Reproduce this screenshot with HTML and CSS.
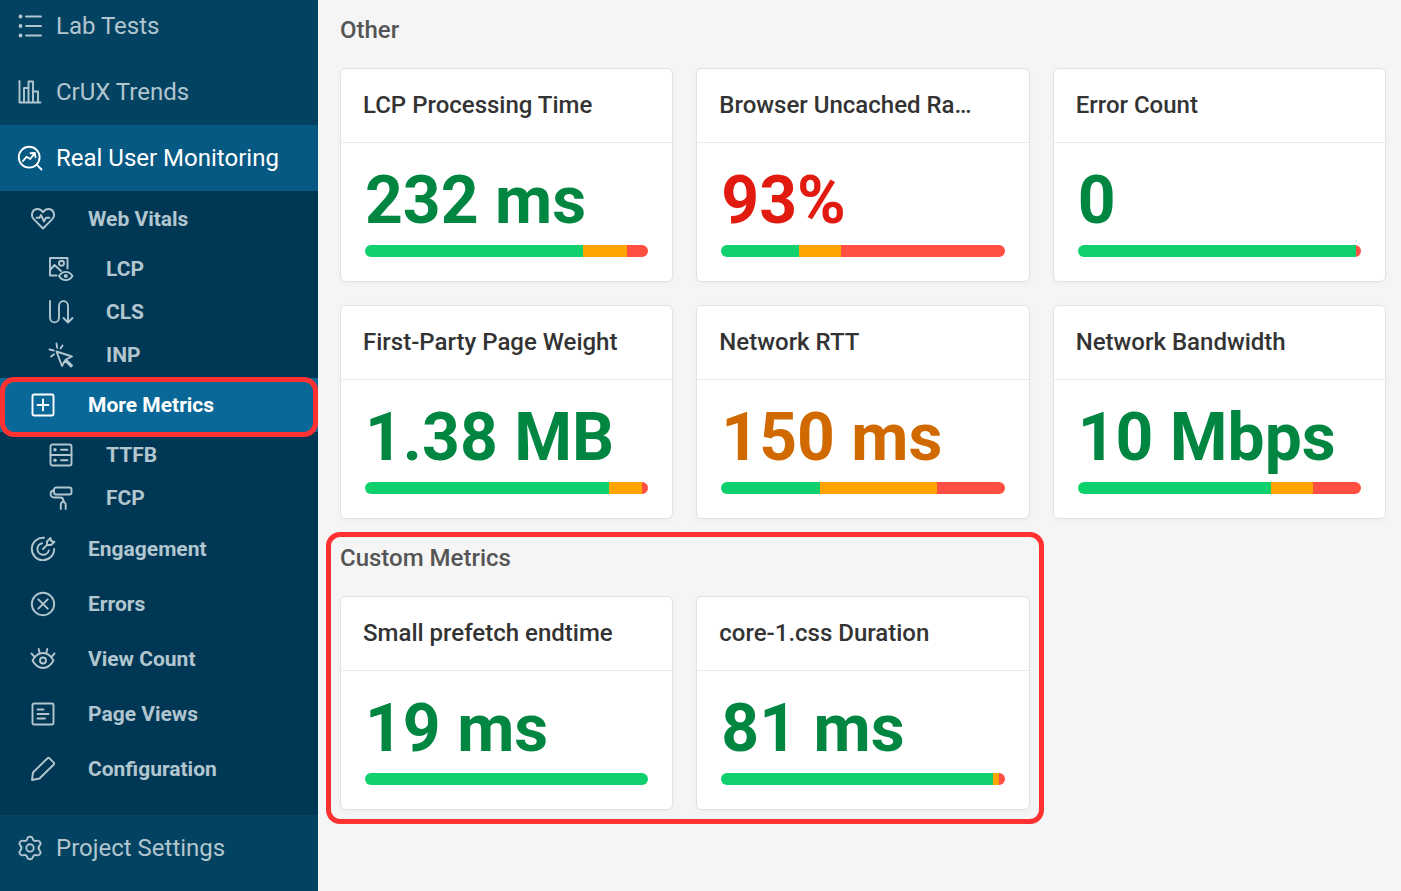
FILE: index.html
```html
<!DOCTYPE html>
<html lang="en">
<head>
<meta charset="utf-8">
<title>Real User Monitoring - More Metrics</title>
<link rel="stylesheet" href="styles.css">
</head>
<body>
<div class="app">
  <nav class="sidebar" aria-label="Project">
    <div class="nav-scroll">
      <a class="nav-item" href="#lab">
        <svg class="icon" viewBox="0 0 24 24"><path d="M8 2.500h15M8 12h15M8 21.500h15"/><g class="dot"><circle cx="2.500" cy="2.500" r="1.900"/><circle cx="2.500" cy="12" r="1.900"/><circle cx="2.500" cy="21.500" r="1.900"/></g></svg>
        Lab Tests</a>
      <a class="nav-item" href="#crux">
        <svg class="icon" viewBox="0 0 24 24"><path d="M1.500 1v21.500H22.500M6 22V8h4.500v14M10.500 22V1.500h4.500V22M15 11.500h5V22"/></svg>
        CrUX Trends</a>
      <a class="nav-item nav-item-open" href="#rum">
        <svg class="icon" viewBox="0 0 24 24"><circle cx="11.200" cy="11.200" r="10.400"/><path d="M18.700 18.700L23.500 23.500M5 15L8.500 10.800l3.700 2.200 4.300-5.500M12.500 7.300l4.300-.3.700 4.200"/></svg>
        Real User Monitoring</a>
      <div class="submenu">
        <a class="sub-item" href="#vitals">
          <svg class="icon" viewBox="0 0 24 24"><path d="M12 21.500L2.500 11.800C-.5 8.500 1 2.500 6 2c2.700-.2 4.800 1.300 6 3.300C13.200 3.300 15.300 1.800 18 2c5 .5 6.500 6.500 3.500 9.800z"/><path d="M5.500 10.800h3l1.500-2.800 3 6.500 2-3.700h3.500"/></svg>
          Web Vitals</a>
        <div class="leaves">
          <a class="leaf" href="#lcp">
            <svg class="icon" viewBox="0 0 24 24"><path d="M7.500 18.500H1V1h17.500v10.500M1 13l4.500-5 6.500 6"/><circle cx="12.500" cy="6.300" r="2.500"/><path d="M10 19c3.500-5.500 10-5.500 13.500 0-3.500 5.500-10 5.500-13.500 0z"/><circle cx="16.800" cy="19" r="1.100"/></svg>
            LCP</a>
          <a class="leaf" href="#cls">
            <svg class="icon" viewBox="0 0 24 24"><path d="M1 1v16.500c0 6.500 9 6.500 9 0V6c0-6.500 9-6.500 9 0v16.500M14.500 18l4.500 4.500 4.500-4.500"/></svg>
            CLS</a>
          <a class="leaf" href="#inp">
            <svg class="icon" viewBox="0 0 24 24"><path d="M7.500 8.500l15.500 5-6.200 3 6.200 6-1 1-6-6-3 5.500zM7.500.500l.7 4.300M.500 6.500l4.300 1M13.500 2.500l-2 3M2 13.500l3-2.200"/></svg>
            INP</a>
        </div>
        <a class="sub-item sub-item-current" href="#more" aria-current="page">
          <svg class="icon" viewBox="0 0 24 24"><rect x="1.500" y="1.500" width="21" height="21" rx="1.500"/><path d="M12 6.500v11M6.500 12h11"/></svg>
          More Metrics</a>
        <div class="leaves">
          <a class="leaf" href="#ttfb">
            <svg class="icon" viewBox="0 0 24 24"><rect x="1.500" y="1.500" width="21" height="21" rx="2"/><path d="M1.500 12h21M12 6.800h6.500M12 17.200h6.500"/><g class="dot"><circle cx="6" cy="6.800" r="1.700"/><circle cx="6" cy="17.200" r="1.700"/></g></svg>
            TTFB</a>
          <a class="leaf" href="#fcp">
            <svg class="icon" viewBox="0 0 24 24"><rect x="5" y="1.500" width="17.500" height="7" rx="2"/><path d="M5 4.500C.500 4.500 .500 11.500 5 11.500h6c3 0 3.500 1.500 3.500 4M11.800 23V18l1.500-2.200h1.900l1.500 2.200v5"/></svg>
            FCP</a>
        </div>
        <a class="sub-item" href="#engagement">
          <svg class="icon" viewBox="0 0 24 24"><path d="M13 .8A11.200 11.200 0 1 0 23.200 12M11 6.300a5.800 5.800 0 1 0 6.800 7.200M12 12l4.300-4.300M16 8V4.500L19.500 1l.7 3 3.300.8L20 8z"/></svg>
          Engagement</a>
        <a class="sub-item" href="#errors">
          <svg class="icon" viewBox="0 0 24 24"><circle cx="12" cy="12" r="11.200"/><path d="M7.300 7.300l9.400 9.400M16.700 7.300l-9.400 9.400"/></svg>
          Errors</a>
        <a class="sub-item" href="#views">
          <svg class="icon" viewBox="0 0 24 24"><path d="M1.500 13.500C7 3.500 17 3.500 22.500 13.500 17 23.500 7 23.500 1.500 13.500z"/><circle cx="12" cy="13.500" r="3"/><path d="M8.700 6L7.700 2M15.300 6l1-4M3.500 9.800L.500 6.500M20.500 9.800l3-3.300"/></svg>
          View Count</a>
        <a class="sub-item" href="#pages">
          <svg class="icon" viewBox="0 0 24 24"><rect x="1.500" y="1.500" width="21" height="21" rx="1.500"/><path d="M6.500 7.500h6M6.500 12h11M6.500 16.500h7.500"/></svg>
          Page Views</a>
        <a class="sub-item" href="#config">
          <svg class="icon" viewBox="0 0 24 24"><path d="M1 23l1-7.500L16.500 1.200q1-.7 1.800 0l4.500 4.500q.7.900 0 1.800L8.500 21.500z"/></svg>
          Configuration</a>
      </div>
      <a class="nav-item" href="#settings">
        <svg class="icon" viewBox="0 0 24 24"><path d="M9.200 2.900C9.700 0 14.300 0 14.800 2.900c.4 1.600 1.900 2.400 3.500 1.900 3.200-1 5.500 2.500 3.400 4.600-1.500 1.600-1.500 3.600 0 5.200 2.100 2.100-.2 5.600-3.400 4.600-1.600-.5-3.100.3-3.500 1.900-.5 2.900-5.100 2.900-5.600 0-.4-1.600-1.900-2.400-3.500-1.900-3.200 1-5.500-2.500-3.400-4.600 1.500-1.600 1.500-3.600 0-5.200C.2 7.300 2.500 3.800 5.700 4.800c1.600.5 3.100-.3 3.500-1.900z"/><circle cx="12" cy="12" r="3.700"/></svg>
        Project Settings</a>
    </div>
  </nav>

  <main class="content">
    <section class="group">
      <h2 class="group-title">Other</h2>
      <div class="cards">
        <article class="card">
          <h3 class="card-title">LCP Processing Time</h3>
          <div class="card-body"><p class="value good">232 ms</p>
            <div class="bar"><span class="bar-good" style="width:76.8%"></span><span class="bar-fair" style="width:15.8%"></span><span class="bar-poor" style="width:7.4%"></span></div></div>
        </article>
        <article class="card">
          <h3 class="card-title">Browser Uncached Ra…</h3>
          <div class="card-body"><p class="value poor">93%</p>
            <div class="bar"><span class="bar-good" style="width:27.5%"></span><span class="bar-fair" style="width:14.8%"></span><span class="bar-poor" style="width:57.7%"></span></div></div>
        </article>
        <article class="card">
          <h3 class="card-title">Error Count</h3>
          <div class="card-body"><p class="value good">0</p>
            <div class="bar"><span class="bar-good" style="width:98.2%"></span><span class="bar-poor" style="width:1.8%"></span></div></div>
        </article>
        <article class="card">
          <h3 class="card-title">First-Party Page Weight</h3>
          <div class="card-body"><p class="value good">1.38 MB</p>
            <div class="bar"><span class="bar-good" style="width:86%"></span><span class="bar-fair" style="width:11.6%"></span><span class="bar-poor" style="width:2.4%"></span></div></div>
        </article>
        <article class="card">
          <h3 class="card-title">Network RTT</h3>
          <div class="card-body"><p class="value fair">150 ms</p>
            <div class="bar"><span class="bar-good" style="width:34.9%"></span><span class="bar-fair" style="width:41.2%"></span><span class="bar-poor" style="width:23.9%"></span></div></div>
        </article>
        <article class="card">
          <h3 class="card-title">Network Bandwidth</h3>
          <div class="card-body"><p class="value good">10 Mbps</p>
            <div class="bar"><span class="bar-good" style="width:68.2%"></span><span class="bar-fair" style="width:14.8%"></span><span class="bar-poor" style="width:17%"></span></div></div>
        </article>
      </div>
    </section>

    <section class="group">
      <h2 class="group-title">Custom Metrics</h2>
      <div class="cards">
        <article class="card">
          <h3 class="card-title">Small prefetch endtime</h3>
          <div class="card-body"><p class="value good">19 ms</p>
            <div class="bar"><span class="bar-good" style="width:100%"></span></div></div>
        </article>
        <article class="card">
          <h3 class="card-title">core-1.css Duration</h3>
          <div class="card-body"><p class="value good">81 ms</p>
            <div class="bar"><span class="bar-good" style="width:95.8%"></span><span class="bar-fair" style="width:2.1%"></span><span class="bar-poor" style="width:2.1%"></span></div></div>
        </article>
        <div class="highlight" aria-hidden="true"></div>
      </div>
    </section>
  </main>
</div>
</body>
</html>
```
FILE: styles.css
```css
* {
  box-sizing: border-box;
}

body {
  margin: 0;
  font-family: Roboto, "Liberation Sans", sans-serif;
  background: #f5f5f5;
  color: #333;
}

.app {
  display: flex;
  min-height: 100vh;
}

/* Sidebar */
.sidebar {
  flex: 0 0 318px;
  background: #034261;
  overflow: hidden;
}

/* The menu is scrolled slightly past its first row. */
.nav-scroll {
  margin-top: -7px;
}

.nav-item,
.sub-item,
.leaf {
  display: flex;
  align-items: center;
  color: #b2c6cf;
  text-decoration: none;
  white-space: nowrap;
}

.nav-item {
  height: 66px;
  padding-left: 18px;
  gap: 14px;
  font-size: 24px;
}

.nav-item-open {
  background: #055982;
  color: #fff;
}

.submenu {
  padding-bottom: 19px;
  background: #003755;
  font-size: 21px;
  font-weight: 700;
}

.sub-item {
  height: 55px;
  padding-left: 31px;
  gap: 33px;
}

.sub-item-current {
  position: relative;
  background: #0a6899;
  color: #fff;
}

.sub-item-current::after {
  content: "";
  position: absolute;
  inset: -1px 0 -5px;
  border: 5px solid #ff3131;
  border-radius: 14px;
}

.leaves {
  padding: 1px 0 1px;
}

.leaves + .sub-item {
  margin-top: 1px;
}

.sub-item-current {
  height: 54px;
}

.leaf {
  height: 43px;
  padding-left: 49px;
  gap: 33px;
}

.icon {
  flex: none;
  width: 24px;
  height: 24px;
  overflow: visible;
  fill: none;
  stroke: currentColor;
  stroke-width: 1.9;
  stroke-linecap: round;
  stroke-linejoin: round;
}

.icon .dot {
  fill: currentColor;
  stroke: none;
}

/* Metric cards */
.content {
  flex: 1;
  min-width: 0;
  padding: 11px 15px 0 22px;
}

.group {
  margin-bottom: 20px;
}

.group-title {
  margin: 0 0 19px;
  font-size: 24px;
  line-height: 38px;
  font-weight: 500;
  color: #555;
}

.cards {
  display: grid;
  grid-template-columns: repeat(3, minmax(0, 1fr));
  gap: 23px;
  position: relative;
}

.card {
  background: #fff;
  border: 1px solid #e2e2e2;
  border-radius: 6px;
  box-shadow: 0 2px 6px rgba(0, 0, 0, 0.03);
}

.card-title {
  margin: 0;
  padding: 18px 22px;
  border-bottom: 1px solid #ebebeb;
  font-size: 24px;
  line-height: 37px;
  font-weight: 500;
  white-space: nowrap;
  overflow: hidden;
  text-overflow: ellipsis;
}

.card-body {
  padding: 18px 24px 24px;
}

.value {
  margin: 0 0 4px;
  font-size: 66px;
  line-height: 80px;
  font-weight: 700;
  white-space: nowrap;
}

.good {
  color: #018642;
}

.fair {
  color: #d06900;
}

.poor {
  color: #e21b11;
}

.bar {
  display: flex;
  height: 12px;
  border-radius: 6px;
  overflow: hidden;
}

.bar-good {
  background: #0fd06c;
}

.bar-fair {
  background: #ffa400;
}

.bar-poor {
  background: #ff4e42;
}

/* Callout frame around the first two columns and their heading */
.highlight {
  position: absolute;
  inset: -64px calc((100% - 46px) / 3 + 9px) -14px -14px;
  border: 5px solid #ff3131;
  border-radius: 14px;
  pointer-events: none;
}
```
